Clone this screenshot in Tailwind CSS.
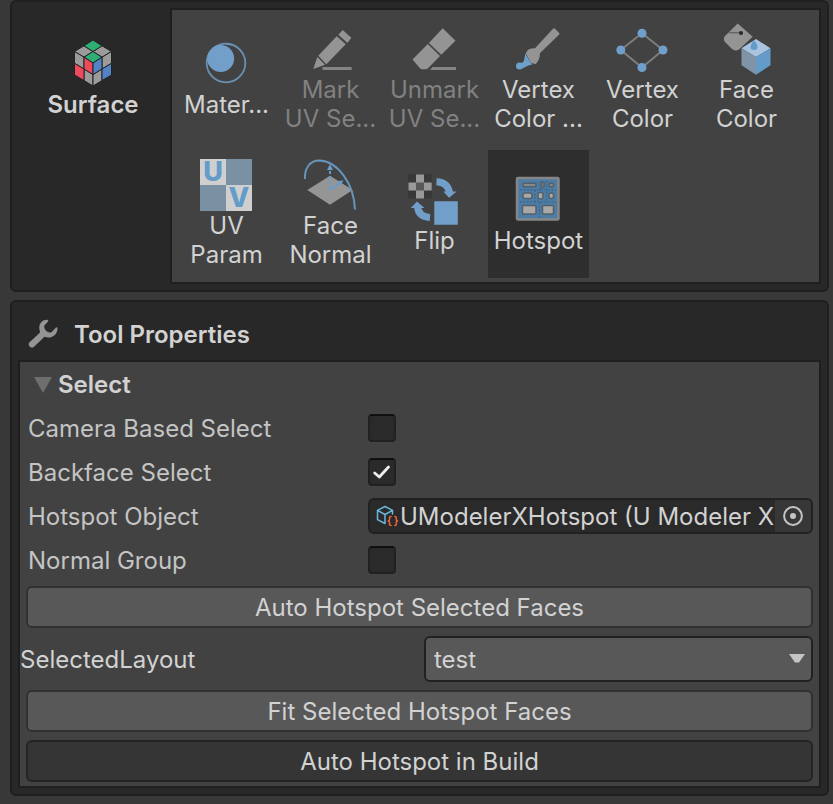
<!DOCTYPE html>
<html lang="en">
<head>
<meta charset="utf-8">
<title>Surface Tools</title>
<script src="https://cdn.jsdelivr.net/npm/@tailwindcss/browser@4"></script>
</head>
<body class="min-h-screen bg-[#383838] pr-1 pl-[10px] font-['Inter','Noto_Sans',sans-serif] text-2xl text-[#d2d2d2]">
<main class="flex flex-col gap-2">

<section class="flex rounded-md border-2 border-[#1f1f1f] bg-[#282828] p-[6px] pl-0" aria-label="Surface tools">
  <div class="flex w-[158px] shrink-0 flex-col items-center pt-[30px] pl-1">
    <svg class="h-[52px] w-[53px]" viewBox="0 0 53 52" aria-hidden="true" stroke="#232323" stroke-width="1" stroke-linejoin="round">
      <g fill="#9b9b9b">
        <path d="M17 7.800 26 13.500 17 19.200 7.500 13.500Z"/><path d="M35 7.800 44.500 13.500 35 19.200 26 13.500Z"/>
        <path d="M7.500 13.500 17 19.200V31L7.500 25.300Z"/><path d="M17 31 26 36.500V48L17 42.500Z"/>
        <path d="M44.500 13.500 35 19.200V31L44.500 25.300Z"/><path d="M35 31 26 36.500V48L35 42.500Z"/>
      </g>
      <path fill="#2fae74" d="M26 2 35 7.800 26 13.500 17 7.800Z"/><path fill="#2fae74" d="M26 13.500 35 19.200 26 25 17 19.200Z"/>
      <path fill="#ee4a5c" d="M17 19.200 26 25V36.500L17 31Z"/><path fill="#ee4a5c" d="M7.500 25.300 17 31V42.500L7.500 37Z"/>
      <path fill="#5482c6" d="M35 19.200 26 25V36.500L35 31Z"/><path fill="#5482c6" d="M44.500 25.300 35 31V42.500L44.500 37Z"/>
    </svg>
    <h1 class="leading-[29px] font-semibold">Surface</h1>
  </div>

  <div class="flex min-w-0 flex-1 flex-wrap content-start gap-x-[3px] gap-y-2 border-2 border-[#1f1f1f] bg-[#424242] py-1 pl-1">
    <button class="flex h-32 w-[101px] flex-col items-center justify-center leading-[29px]">
      <svg class="h-[52px] w-[53px] shrink-0" viewBox="0 0 53 52" aria-hidden="true"><circle cx="26" cy="25" r="19.300" fill="none" stroke="#6990b2" stroke-width="1.800"/><path d="M26 5.500C35 5.500 43 12 44.500 20 40 11 35 7 26 7Z" fill="#6990b2"/><circle cx="20.700" cy="20.500" r="13.500" fill="#719fc9"/></svg>
      <span>Mater...</span>
    </button>
    <button disabled class="flex h-32 w-[101px] flex-col items-center justify-center leading-[29px] whitespace-nowrap text-[#818181]">
      <svg class="h-[52px] w-[53px] shrink-0" viewBox="0 0 53 52" aria-hidden="true" fill="#949494"><path d="M38.700 7 47.300 14.700 43.500 20 34.300 11.700Z"/><path d="M32.700 13.300 41.700 21.300 22.300 41.300 14.300 32.700Z"/><path d="M13.300 34 21 41.700 9.300 46Z"/><path fill="#858585" d="M18.500 44H47.700V47H18.500Z"/></svg>
      <span>Mark<br>UV Se...</span>
    </button>
    <button disabled class="flex h-32 w-[101px] flex-col items-center justify-center leading-[29px] whitespace-nowrap text-[#818181]">
      <svg class="h-[52px] w-[53px] shrink-0" viewBox="0 0 53 52" aria-hidden="true" fill="#949494"><path d="M34.700 5.300 47.500 17.700 33.200 31.700 20.900 20Z"/><path d="M19.800 21 32 32.900 20 45.300Q19 46.300 18 46.300H14Q13 46.300 12 45.300L4.500 36.500Z"/><path fill="#858585" d="M24.500 44H48V47H22Z"/></svg>
      <span>Unmark<br>UV Se...</span>
    </button>
    <button class="flex h-32 w-[101px] flex-col items-center justify-center leading-[29px] whitespace-nowrap">
      <svg class="h-[52px] w-[53px] shrink-0" viewBox="0 0 53 52" aria-hidden="true"><path fill="#949494" d="M41 5.700Q42 4.700 43 5.700L47 9.700Q48 10.700 47 11.700L28 30Q28 37 23.500 41.300L18.500 39.500 13.800 30.300 16 26.700Q19 25.300 23 25.300Z"/><path fill="#6fa0cc" d="M13.300 30.500 18 39 20.700 41.300Q16 42 10.500 45.500L8.500 40Q12 40 12.300 36Z"/><circle cx="7.500" cy="43" r="3.500" fill="#6fa0cc"/></svg>
      <span>Vertex<br>Color ...</span>
    </button>
    <button class="flex h-32 w-[101px] flex-col items-center justify-center leading-[29px]">
      <svg class="h-[52px] w-[53px] shrink-0" viewBox="0 0 53 52" aria-hidden="true"><path d="M26 10.300 47 27 26 44.500 4.700 27Z" fill="none" stroke="#7d7d7d" stroke-width="2"/><g fill="#6f9fca"><circle cx="26" cy="10.300" r="4.500"/><circle cx="47" cy="27" r="4.500"/><circle cx="26" cy="44.500" r="4.500"/><circle cx="4.800" cy="27" r="4.500"/></g></svg>
      <span>Vertex<br>Color</span>
    </button>
    <button class="flex h-32 w-[101px] flex-col items-center justify-center leading-[29px]">
      <svg class="h-[52px] w-[53px] shrink-0" viewBox="0 0 53 52" aria-hidden="true"><path fill="#949494" d="M17.700.500 32.700 13.700 19 26.500Q15 29 11.500 25.500L5 19Q3 16.500 4.500 13.500Z"/><path d="M9 9.700H21" stroke="#666" stroke-width="1.500"/><circle cx="21" cy="10" r="2" fill="#262626"/><path fill="#a9c3e0" d="M36 16 50.500 25.300 36 34 21.500 25.300Z"/><path fill="#7f94a7" d="M21.500 25.300 36 34V51.700L21.500 42.300Z"/><path fill="#639cc9" d="M50.500 25.300 36 34V51.700L50.500 42.300Z"/><path fill="#639cc9" d="M34 17Q37.500 21.500 37.500 24A3.500 3 0 0 1 30.500 24Q30.500 21.500 34 17Z"/></svg>
      <span>Face<br>Color</span>
    </button>
    <button class="flex h-32 w-[101px] flex-col items-center justify-center leading-[29px]">
      <svg class="h-[52px] w-[53px] shrink-0 overflow-visible font-extrabold" viewBox="0 0 53 52" aria-hidden="true"><path fill="#cfcfcf" d="M0 0H52V52H0Z"/><path fill="#7a90a3" d="M26 0H52V26H26ZM0 26H26V52H0Z"/><g fill="#639cc9" font-size="27" text-anchor="middle"><text x="13" y="22">U</text><text x="39" y="48">V</text></g></svg>
      <span>UV<br>Param</span>
    </button>
    <button class="flex h-32 w-[101px] flex-col items-center justify-center leading-[29px]">
      <svg class="h-[52px] w-[53px] shrink-0" viewBox="0 0 53 52" aria-hidden="true"><path fill="#959595" d="M26 16.700 48.700 31 26 45.700 3.300 31Z"/><g fill="none" stroke="#6794bb" stroke-width="2"><path d="M.900 20C.500 9 6 1.500 15 1.500 34 2 50 25 51 50.500"/><path stroke="#6a9cc9" stroke-dasharray="3 2" d="M26 30V9"/><path stroke="#6a9cc9" d="M26 31 37 23"/></g><path fill="#6a9cc9" d="M26 5 29 11H23ZM39.500 21.500 33 22 36.500 26.500Z"/></svg>
      <span>Face<br>Normal</span>
    </button>
    <button class="flex h-32 w-[101px] flex-col items-center justify-center leading-[29px]">
      <svg class="h-[52px] w-[53px] shrink-0" viewBox="0 0 53 52" aria-hidden="true"><path fill="#383838" d="M0 0H24V24.500H0Z"/><path fill="#999" d="M8 .500H16V8.500H23.700V16.500H16V24.500H8V16.500H.500V8.500H8Z"/><path fill="#585858" d="M8 8.500H16V16.500H8Z"/><path fill="#719fc9" d="M26.300 27.300H49.800V50.800H26.300ZM35.300 17.500H48.700L41 23.800ZM2.700 34 9 27.500 16.500 34Z"/><g fill="none" stroke="#719fc9" stroke-width="7"><path d="M28.500 7.700C36 8 40.500 12 41.700 19"/><path d="M22 43.500C14 43 10 39 9.500 32.500"/></g></svg>
      <span>Flip</span>
    </button>
    <button aria-pressed="true" class="flex h-32 w-[101px] flex-col items-center justify-center bg-[#2e2e2e] leading-[29px]">
      <svg class="h-[52px] w-[53px] shrink-0" viewBox="0 0 53 52" aria-hidden="true"><rect x="5" y="4" width="41.500" height="41.500" rx="1" fill="#4d7ca4" stroke="#868686" stroke-width="2.500"/><path d="M8 16H44M8 28H44M28 7V16M34.500 7V28M23 16V28M27.500 28V44" fill="none" stroke="#43688a" stroke-width="1.500" stroke-dasharray="2 1.500"/><g stroke="#52606b" stroke-width="1.500"><g fill="#85898c"><rect x="11" y="9.200" width="13" height="3.500" rx="1"/><rect x="29.500" y="8" width="2.500" height="5.500" rx="1"/><rect x="37" y="9.200" width="4.500" height="3.500" rx="1"/></g><g fill="#aaa8a5"><rect x="11" y="19" width="9" height="5.500" rx="2"/><rect x="26" y="18.500" width="5" height="6.500" rx="2"/><rect x="37" y="19" width="4.500" height="5.500" rx="2"/><rect x="10.500" y="31.500" width="13.500" height="8.500" rx="1"/><rect x="30.500" y="31.500" width="11" height="8.500" rx="1"/></g></g></svg>
      <span>Hotspot</span>
    </button>
  </div>
</section>

<section class="rounded-md border-2 border-[#1f1f1f] bg-[#282828] px-[6px] pb-[6px]" aria-labelledby="props">
  <header class="flex h-[58px] items-center gap-4 pt-[6px] pl-[10px]">
    <svg class="size-[30px]" viewBox="0 0 30 30" aria-hidden="true"><path fill="#949494" d="M19.500.700C13.500.500 10 5.500 11.700 11.500L12 13.500 1.300 23.500C-.700 26 2.500 30 5.500 28.200L16.500 17.800C23 20.500 30 16 29.500 8.500L28 8.500 23.500 13.300C20.500 14.500 16 11.500 16.200 6.800L20.500 2Z"/></svg>
    <h2 id="props" class="leading-[29px] font-semibold">Tool Properties</h2>
  </header>
  <div class="flex flex-col gap-2 border-2 border-[#1f1f1f] bg-[#424242] pb-1">
    <div class="-mb-1 flex flex-col pr-[6px] pl-2">
      <button aria-expanded="true" class="flex h-11 items-center gap-[6px] pt-[2px] pl-[6px] font-semibold">
        <svg class="h-4 w-[18px]" viewBox="0 0 18 16" aria-hidden="true"><path fill="#6e6e6e" d="M0 0H18L9 16Z"/></svg>
        Select
      </button>
      <div class="flex h-11 items-center">
        <label for="camera" class="w-[340px] pt-[2px] text-[#c4c4c4]">Camera Based Select</label>
        <input id="camera" type="checkbox" class="size-7 appearance-none rounded border-2 border-[#212121] border-t-[#101010] bg-[#2a2a2a]">
      </div>
      <div class="flex h-11 items-center">
        <label for="backface" class="w-[340px] pt-[2px] text-[#c4c4c4]">Backface Select</label>
        <span class="grid">
          <input id="backface" type="checkbox" checked class="peer col-start-1 row-start-1 size-7 appearance-none rounded border-2 border-[#212121] border-t-[#101010] bg-[#2a2a2a]">
          <svg class="pointer-events-none invisible col-start-1 row-start-1 size-7 peer-checked:visible" viewBox="0 0 28 28" aria-hidden="true"><path d="M6.700 15 11.300 19 20.500 9" fill="none" stroke="#eee" stroke-width="2.800" stroke-linecap="round" stroke-linejoin="round"/></svg>
        </span>
      </div>
      <div class="flex h-11 items-center">
        <label for="object" class="w-[340px] shrink-0 pt-[2px] text-[#c4c4c4]">Hotspot Object</label>
        <div class="flex h-9 min-w-0 flex-1 items-center overflow-hidden rounded-md border-2 border-[#212121] bg-[#2a2a2a] pl-[6px]">
          <svg class="h-[22px] w-6 shrink-0" viewBox="0 0 24 22" fill="none" stroke-linecap="round" stroke-linejoin="round" aria-hidden="true"><path stroke="#69b7dc" stroke-width="1.500" d="M16.500 9V5.300L9 1.500 1.500 5.300V14.700L9 18.500M1.500 5.300 9 9.500 16.500 5.300M9 9.500V18.500"/><path stroke="#f0643a" stroke-width="1.500" d="M15 11.500Q13.500 11.500 13.500 13V14.500Q13.500 16 12.200 16 13.500 16 13.500 17.500V19Q13.500 20.500 15 20.500M18.800 11.500Q20.300 11.500 20.300 13V14.500Q20.300 16 21.600 16 20.300 16 20.300 17.500V19Q20.300 20.500 18.800 20.500"/></svg>
          <input id="object" type="text" readonly value="UModelerXHotspot (U Modeler X Hotspot)" class="h-8 min-w-0 flex-1 bg-transparent pt-[2px] outline-none">
          <button aria-label="Pick object" class="flex h-8 w-9 shrink-0 items-center justify-center bg-[#373737]">
            <svg class="size-5" viewBox="0 0 20 20" aria-hidden="true"><circle cx="10" cy="10" r="8.900" fill="none" stroke="#c4c4c4" stroke-width="2"/><circle cx="10" cy="10" r="3" fill="#c4c4c4"/></svg>
          </button>
        </div>
      </div>
      <div class="flex h-11 items-center">
        <label for="group" class="w-[340px] pt-[2px] text-[#c4c4c4]">Normal Group</label>
        <input id="group" type="checkbox" class="size-7 appearance-none rounded border-2 border-[#212121] border-t-[#101010] bg-[#2a2a2a]">
      </div>
    </div>
    <button class="mx-[6px] h-[42px] rounded-md border-2 border-[#303030] bg-[#585858] pt-[2px]">Auto Hotspot Selected Faces</button>
    <div class="flex items-center pr-[6px]">
      <label for="layout" class="w-[404px] shrink-0 pt-[2px]">SelectedLayout</label>
      <div class="grid min-w-0 flex-1 items-center">
        <select id="layout" class="col-start-1 row-start-1 h-[46px] w-full appearance-none rounded-md border-2 border-[#212121] bg-[#585858] px-2 pt-[2px]"><option>test</option></select>
        <svg class="pointer-events-none col-start-1 row-start-1 mr-2 h-[10px] w-4 justify-self-end" viewBox="0 0 16 10" aria-hidden="true"><path fill="#c4c4c4" d="M0 0H16L10 8.500H6Z"/></svg>
      </div>
    </div>
    <button class="mx-[6px] h-[42px] rounded-md border-2 border-[#303030] bg-[#585858] pt-[2px]">Fit Selected Hotspot Faces</button>
    <button class="mx-[6px] h-[42px] rounded-md border-2 border-[#242424] bg-[#353535] pt-[2px]">Auto Hotspot in Build</button>
  </div>
</section>
</main>
</body>
</html>
